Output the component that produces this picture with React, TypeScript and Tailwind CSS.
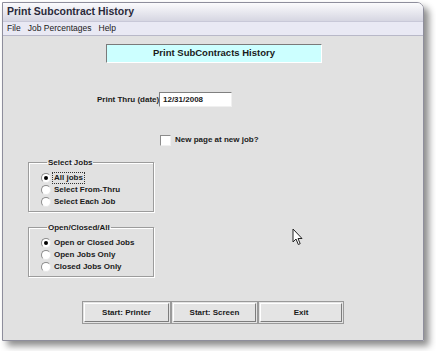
import React from 'react'

const ui = { fontFamily: '"Liberation Sans", Arial, sans-serif' }

function Radio({ checked, label, focus }: { checked?: boolean; label: string; focus?: boolean }) {
  return (
    <div className="flex items-center h-[12px]">
      <div className="w-[10px] h-[10px] rounded-full bg-white border border-[#8c8c8c] border-r-[#e8e8e8] border-b-[#e8e8e8] flex items-center justify-center">
        {checked && <div className="w-[4px] h-[4px] rounded-full bg-black" />}
      </div>
      <span className={`ml-[2px] px-[1px] text-[8px] font-bold text-[#1a1a1a] leading-[10px] ${focus ? 'outline outline-1 outline-dotted outline-[#333]' : ''}`}>
        {label}
      </span>
    </div>
  )
}

function Group({ title, items }: { title: string; items: { label: string; checked?: boolean; focus?: boolean }[] }) {
  return (
    <fieldset className="w-[126px] h-[54px] border border-[#9c9c9c] shadow-[inset_1px_1px_0_#fff,1px_1px_0_#fff] pl-[12px] pt-[5px]">
      <legend className="ml-[6px] px-[1px] text-[8px] font-bold text-[#1a1a1a] leading-[9px]">{title}</legend>
      <div className="flex flex-col">
        {items.map(i => (
          <Radio key={i.label} {...i} />
        ))}
      </div>
    </fieldset>
  )
}

function Btn({ label, w }: { label: string; w: string }) {
  return (
    <div className={`${w} h-[23px] border border-[#9a9a9a] p-[1px] bg-[#e4e4e4]`}>
      <div className="w-full h-full border border-white border-r-[#7d7d7d] border-b-[#7d7d7d] flex items-center justify-center text-[8px] font-bold text-[#1a1a1a]">
        {label}
      </div>
    </div>
  )
}

export default function App() {
  return (
    <div className="relative w-[436px] h-[351px] bg-white overflow-hidden" style={ui}>
      <div className="ml-[2px] mt-[2px] w-[422px] h-[339px] border border-[#8e8e9c] rounded-tr-[7px] shadow-[5px_5px_7px_rgba(0,0,0,0.45)] flex flex-col overflow-hidden">
        <div className="h-[18px] bg-gradient-to-b from-[#fbfbfd] to-[#d6d6e2] flex items-center pl-[4px]">
          <span className="text-[10.5px] font-bold text-[#2a2a3a]">Print Subcontract History</span>
        </div>
        <div className="h-[15px] bg-[#e9e9f4] border-t border-[#c8c8d8] border-b border-b-[#b8b8c8] flex items-center pl-[4px] gap-[7px] text-[8.5px] text-[#1a1a1a]">
          <span>File</span>
          <span>Job Percentages</span>
          <span>Help</span>
        </div>
        <div className="flex-1 bg-[#e1e1e1] flex flex-col">
          <div className="ml-[103px] mt-[8px] w-[216px] h-[19px] bg-[#ccffff] border border-[#7a7a7a] border-r-white border-b-white flex items-center justify-center">
            <span className="text-[9.5px] font-bold text-[#1a1a1a]">Print SubContracts History</span>
          </div>
          <div className="mt-[29px] ml-[94px] flex items-center">
            <span className="text-[8px] font-bold text-[#1a1a1a] w-[62px] whitespace-nowrap">Print Thru (date)</span>
            <div className="w-[73px] h-[15px] bg-white border border-[#808080] border-r-[#f0f0f0] border-b-[#f0f0f0] flex items-center pl-[3px]">
              <span className="text-[8px] font-bold text-[#1a1a1a]">12/31/2008</span>
            </div>
          </div>
          <div className="mt-[27px] ml-[157px] flex items-center">
            <div className="w-[11px] h-[11px] bg-white border border-[#8c8c8c] border-r-[#f0f0f0] border-b-[#f0f0f0]" />
            <span className="ml-[4px] text-[8px] font-bold text-[#1a1a1a]">New page at new job?</span>
          </div>
          <div className="mt-[12px] ml-[25px]">
            <Group
              title="Select Jobs"
              items={[{ label: 'All jobs', checked: true, focus: true }, { label: 'Select From-Thru' }, { label: 'Select Each Job' }]}
            />
          </div>
          <div className="mt-[11px] ml-[25px]">
            <Group
              title="Open/Closed/All"
              items={[{ label: 'Open or Closed Jobs', checked: true }, { label: 'Open Jobs Only' }, { label: 'Closed Jobs Only' }]}
            />
          </div>
          <div className="mt-[24px] ml-[79px] flex">
            <Btn label="Start: Printer" w="w-[89px]" />
            <Btn label="Start: Screen" w="w-[87px]" />
            <Btn label="Exit" w="w-[86px]" />
          </div>
        </div>
      </div>
      <svg className="absolute left-[292px] top-[228px]" width="12" height="19" viewBox="0 0 12 19">
        <path d="M1 1 L1 14 L4 11 L6.3 16.5 L8.2 15.7 L6 10.5 L10 10.5 Z" fill="white" stroke="#222" strokeWidth="1" strokeLinejoin="round" />
      </svg>
    </div>
  )
}
